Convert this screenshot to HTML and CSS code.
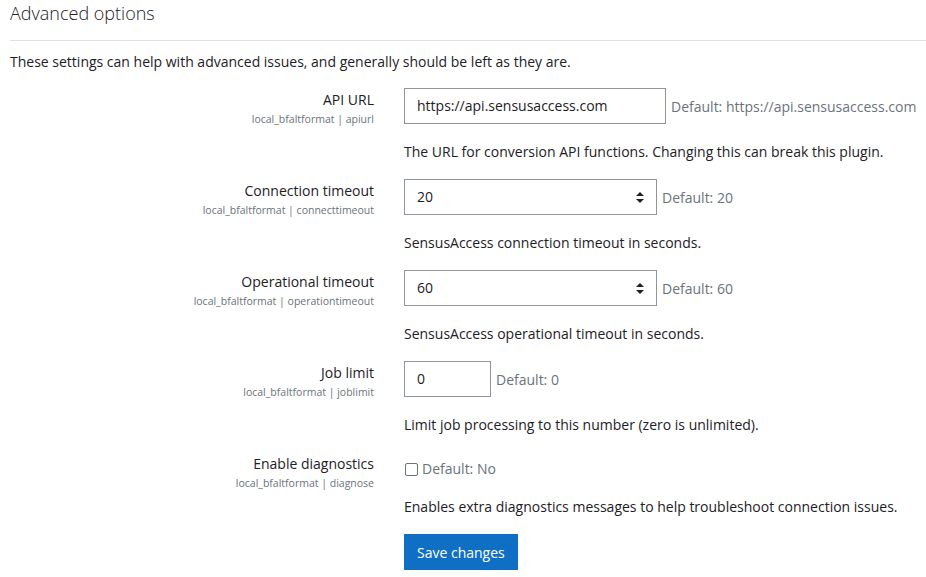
FILE: index.html
```html
<!DOCTYPE html>
<html lang="en">
<head>
<meta charset="utf-8">
<title>Advanced options</title>
<link rel="stylesheet" href="styles.css">
</head>
<body>
<div class="page">
  <h3 class="section-title">Advanced options</h3>
  <p class="intro">These settings can help with advanced issues, and generally should be left as they are.</p>

  <div class="setting">
    <div class="label-col">
      <label class="label">API URL</label>
      <span class="shortname">local_bfaltformat | apiurl</span>
    </div>
    <div class="field-col">
      <div class="field-line">
        <div class="input input-url">https://api.sensusaccess.com</div>
        <span class="default">Default: https://api.sensusaccess.com</span>
      </div>
      <div class="desc">The URL for conversion API functions. Changing this can break this plugin.</div>
    </div>
  </div>

  <div class="setting">
    <div class="label-col">
      <label class="label">Connection timeout</label>
      <span class="shortname">local_bfaltformat | connecttimeout</span>
    </div>
    <div class="field-col">
      <div class="field-line">
        <div class="input select">20
          <svg class="caret" width="8" height="11" viewBox="0 0 8 11"><path d="M4 0L8 4H0z M4 11L0 7H8z" fill="#1d2125"/></svg>
        </div>
        <span class="default">Default: 20</span>
      </div>
      <div class="desc">SensusAccess connection timeout in seconds.</div>
    </div>
  </div>

  <div class="setting">
    <div class="label-col">
      <label class="label">Operational timeout</label>
      <span class="shortname">local_bfaltformat | operationtimeout</span>
    </div>
    <div class="field-col">
      <div class="field-line">
        <div class="input select">60
          <svg class="caret" width="8" height="11" viewBox="0 0 8 11"><path d="M4 0L8 4H0z M4 11L0 7H8z" fill="#1d2125"/></svg>
        </div>
        <span class="default">Default: 60</span>
      </div>
      <div class="desc">SensusAccess operational timeout in seconds.</div>
    </div>
  </div>

  <div class="setting">
    <div class="label-col">
      <label class="label">Job limit</label>
      <span class="shortname">local_bfaltformat | joblimit</span>
    </div>
    <div class="field-col">
      <div class="field-line">
        <div class="input input-small">0</div>
        <span class="default">Default: 0</span>
      </div>
      <div class="desc">Limit job processing to this number (zero is unlimited).</div>
    </div>
  </div>

  <div class="setting setting-check">
    <div class="label-col">
      <label class="label">Enable diagnostics</label>
      <span class="shortname">local_bfaltformat | diagnose</span>
    </div>
    <div class="field-col">
      <div class="check-line">
        <span class="checkbox"></span>
        <span class="default">Default: No</span>
      </div>
      <div class="desc">Enables extra diagnostics messages to help troubleshoot connection issues.</div>
    </div>
  </div>

  <div class="actions">
    <button class="btn">Save changes</button>
  </div>
</div>
</body>
</html>
```

FILE: styles.css
```css
* { box-sizing: border-box; }
html, body { margin: 0; padding: 0; background: #fff; }
body {
  font-family: "Open Sans", "Noto Sans", sans-serif;
  font-size: 14px;
  color: #1d2125;
}
.page { padding: 0 0 0 10px; }
.section-title {
  margin: 0;
  padding-top: 1px;
  font-size: 18px;
  font-weight: 300;
  line-height: 24px;
  color: #1d2125;
  border-bottom: 1px solid #dee2e6;
  padding-bottom: 15px;
}
.intro { margin: 10px 0 15px; line-height: 22px; }
.setting {
  display: grid;
  grid-template-columns: 364px 1fr;
  column-gap: 30px;
  margin-bottom: 16px;
}
.label-col { text-align: right; padding-top: 1px; }
.label { display: block; line-height: 22px; }
.shortname { display: block; font-size: 10.5px; color: #6a737b; line-height: 16px; }
.field-col { display: flex; flex-direction: column; }
.field-line { display: flex; align-items: flex-start; }
.input {
  height: 36px;
  border: 1px solid #8f959e;
  padding: 0 12px;
  display: flex;
  align-items: center;
  line-height: 22px;
}
.input-url { width: 262px; }
.input-small { width: 87px; }
.select { width: 253px; justify-content: space-between; padding-right: 12px; }
.caret { display: block; }
.default { color: #6a737b; margin-left: 5px; line-height: 22px; padding-top: 8px; }
.desc { margin-top: 17px; line-height: 22px; }
.check-line { display: flex; align-items: center; height: 22px; margin-top: 6px; }
.check-line .default { padding-top: 0; margin-left: 4px; }
.checkbox {
  width: 13px; height: 13px;
  border: 1px solid #6a737b;
  border-radius: 2px;
  margin-left: 1px;
}
.setting-check .desc { margin-top: 16px; }
.actions { padding-left: 394px; margin-top: 1px; }
.btn {
  font-family: inherit;
  font-size: 14px;
  color: #fff;
  background: #0f6fc5;
  border: none;
  border-radius: 0;
  height: 36px;
  padding: 0 13px;
}
```
